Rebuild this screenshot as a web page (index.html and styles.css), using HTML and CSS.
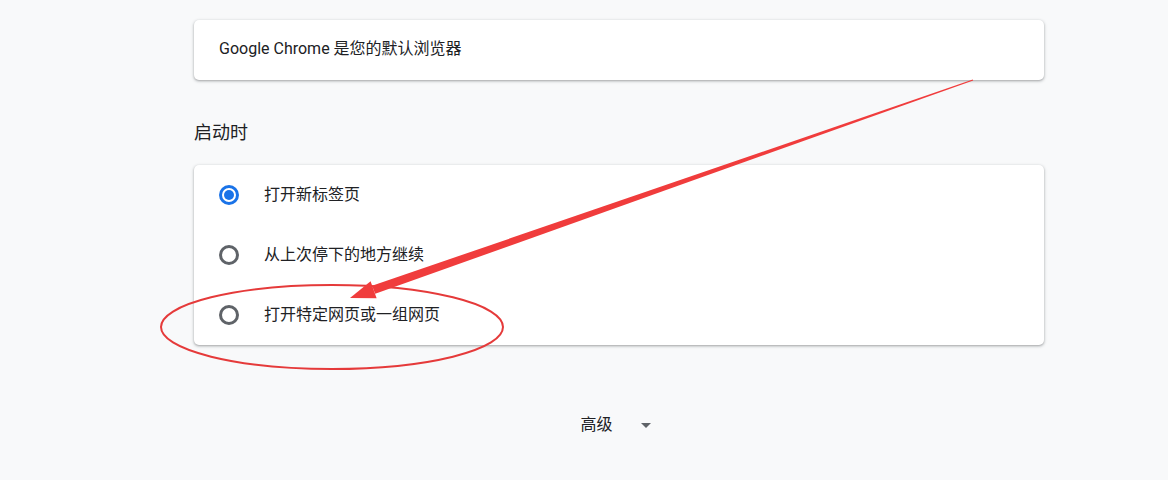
FILE: index.html
```html
<!DOCTYPE html>
<html lang="zh-CN">
<head>
<meta charset="utf-8">
<title>设置</title>
<link rel="stylesheet" href="styles.css">
</head>
<body>
<main class="page">
  <section class="card card-single">
    <div class="card-text">Google Chrome 是您的默认浏览器</div>
  </section>

  <h2 class="section-title">启动时</h2>

  <section class="card">
    <div class="radio-row">
      <span class="radio checked"></span>
      <span class="radio-label">打开新标签页</span>
    </div>
    <div class="radio-row">
      <span class="radio"></span>
      <span class="radio-label">从上次停下的地方继续</span>
    </div>
    <div class="radio-row">
      <span class="radio"></span>
      <span class="radio-label">打开特定网页或一组网页</span>
    </div>
  </section>

  <div class="advanced">
    <span class="advanced-label">高级</span>
    <span class="advanced-arrow"></span>
  </div>
</main>

<svg class="annotation" width="1168" height="480" viewBox="0 0 1168 480" xmlns="http://www.w3.org/2000/svg">
  <ellipse cx="332" cy="327" rx="171" ry="42" fill="none" stroke="#e53a3a" stroke-width="2"/>
  <polygon points="973.2,80.5 972.8,79.5 372.0,285.8 375.2,293.8" fill="#f03c3c"/>
  <polygon points="350,298 370.6,281.3 376.6,298.3" fill="#f03c3c"/>
</svg>
</body>
</html>
```

FILE: styles.css
```css
html, body {
  margin: 0;
  padding: 0;
}

body {
  background: #f8f9fa;
  font-family: Roboto, "Noto Sans CJK SC", sans-serif;
  color: #202124;
  width: 1168px;
  height: 480px;
  overflow: hidden;
  position: relative;
}

.page {
  width: 850px;
  padding: 20px 0 0 194px;
}

.card {
  background: #fff;
  border-radius: 5px;
  box-shadow: 0 1px 2px rgba(60, 64, 67, 0.3), 0 1px 3px 1px rgba(60, 64, 67, 0.15);
}

.card-single {
  height: 60px;
  display: flex;
  align-items: center;
  padding-left: 25px;
}

.card-text {
  font-size: 16px;
  line-height: 20px;
  padding-bottom: 2px;
}

.section-title {
  margin: 41px 0 20px 0;
  font-size: 18px;
  line-height: 24px;
  font-weight: 400;
  color: #202124;
}

.radio-row {
  height: 60px;
  display: flex;
  align-items: center;
  padding-left: 25px;
  gap: 25px;
}

.radio {
  box-sizing: border-box;
  width: 20px;
  height: 20px;
  border-radius: 50%;
  border: 3px solid #5f6368;
  display: flex;
  align-items: center;
  justify-content: center;
  flex: none;
}

.radio.checked {
  border-color: #1a73e8;
}

.radio.checked::after {
  content: "";
  width: 10px;
  height: 10px;
  border-radius: 50%;
  background: #1a73e8;
}

.radio-label {
  font-size: 16px;
  line-height: 20px;
}

.advanced {
  margin: 60px 0 0 0;
  height: 40px;
  display: flex;
  align-items: center;
  justify-content: center;
  padding-right: 7px;
  gap: 28px;
}

.advanced-label {
  font-size: 16px;
  line-height: 20px;
}

.advanced-arrow {
  width: 0;
  height: 0;
  border-left: 5.5px solid transparent;
  border-right: 5.5px solid transparent;
  border-top: 5.5px solid #5f6368;
  margin-top: 1px;
}

.annotation {
  position: absolute;
  left: 0;
  top: 0;
  pointer-events: none;
}
```
